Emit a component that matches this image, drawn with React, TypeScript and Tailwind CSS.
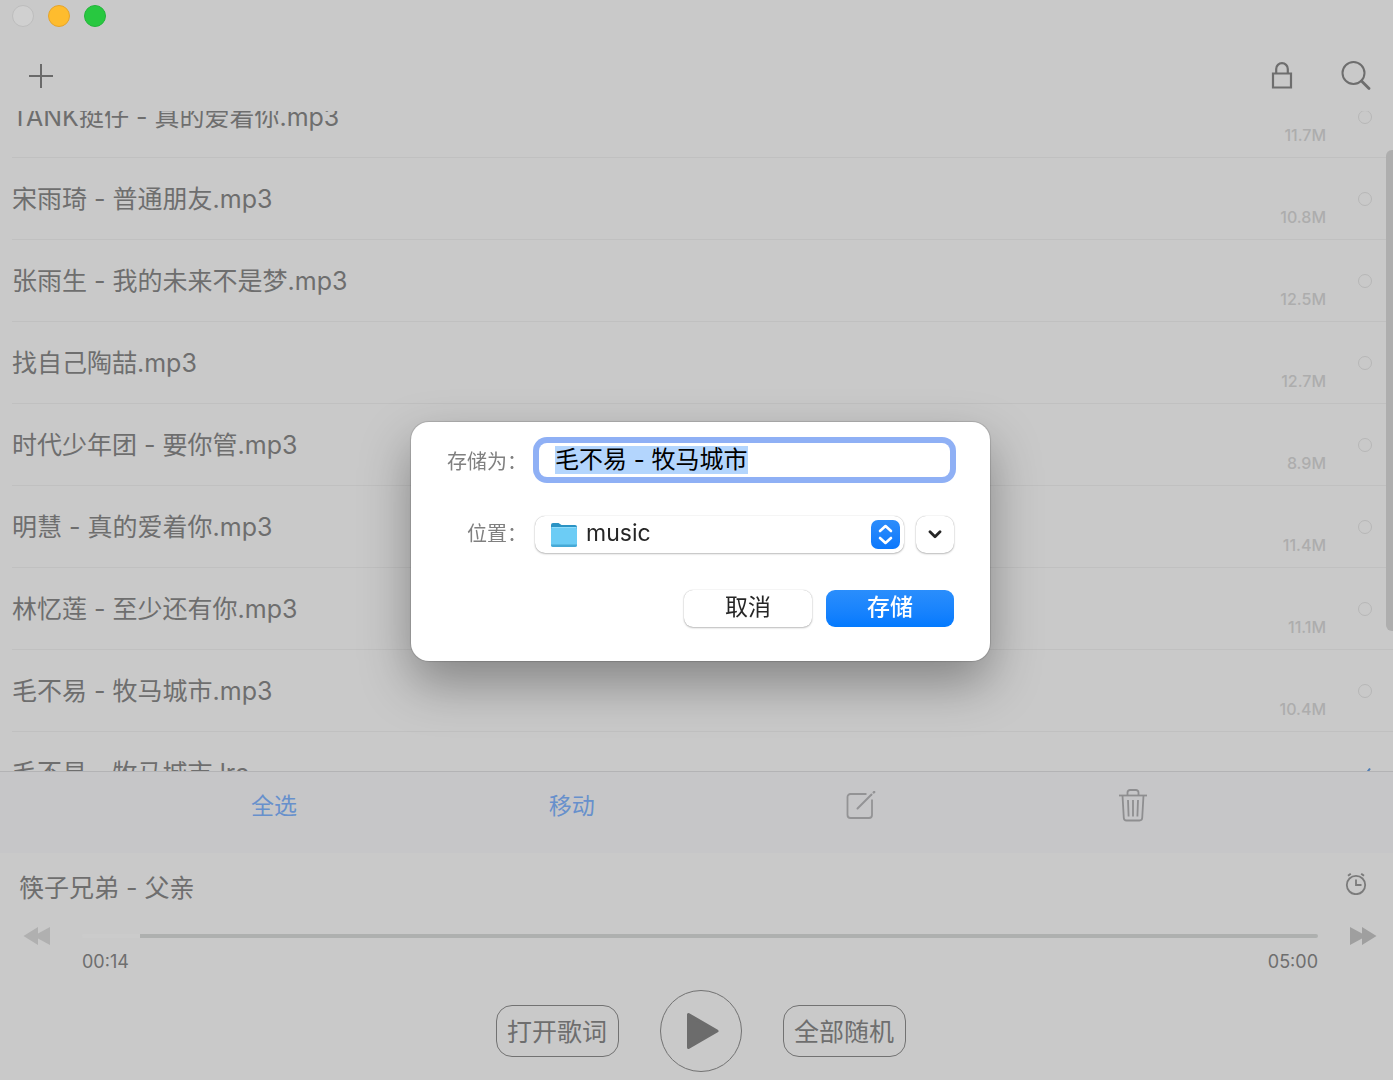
import { useEffect, useRef, useState } from "react";

type Track = { name: string; size?: string; done?: boolean };

const tracks: Track[] = [
  { name: "TANK挺仔 - 真的爱着你.mp3", size: "11.7M" },
  { name: "宋雨琦 - 普通朋友.mp3", size: "10.8M" },
  { name: "张雨生 - 我的未来不是梦.mp3", size: "12.5M" },
  { name: "找自己陶喆.mp3", size: "12.7M" },
  { name: "时代少年团 - 要你管.mp3", size: "8.9M" },
  { name: "明慧 - 真的爱着你.mp3", size: "11.4M" },
  { name: "林忆莲 - 至少还有你.mp3", size: "11.1M" },
  { name: "毛不易 - 牧马城市.mp3", size: "10.4M" },
  { name: "毛不易 - 牧马城市.lrc", done: true },
];

const DURATION = 300;

function PlusIcon() {
  return (
    <svg width="24" height="24" viewBox="0 0 24 24" fill="none" stroke="#6a6a6a" strokeWidth="2">
      <path d="M12 0v24M0 12h24" />
    </svg>
  );
}

function LockIcon() {
  return (
    <svg width="22" height="28" viewBox="0 0 22 28" fill="none" stroke="#6e6e6e" strokeWidth="2.200">
      <path d="M2 11.500h18v14H2z" />
      <path d="M5.200 11.500V7a5.800 5.800 0 0 1 11.600 0v4.500" />
    </svg>
  );
}

function SearchIcon() {
  return (
    <svg width="30" height="30" viewBox="0 0 30 30" fill="none" stroke="#6e6e6e">
      <circle cx="12.500" cy="12" r="11" strokeWidth="2" />
      <path d="M20.500 20l7.500 7.500" strokeWidth="2.800" strokeLinecap="round" />
    </svg>
  );
}

function EditIcon() {
  return (
    <svg width="30" height="30" viewBox="0 0 30 30" fill="none" stroke="#939395" strokeWidth="1.800">
      <path d="M20.500 3H4.500A3 3 0 0 0 1.500 6v18a3 3 0 0 0 3 3h18.500a3 3 0 0 0 3-3V8.500" />
      <path d="M11.500 17.500L25.500 3.500" strokeWidth="2" strokeLinecap="round" />
      <path d="M27.800 1.400l.4-.4" strokeWidth="2.400" strokeLinecap="round" />
    </svg>
  );
}

function TrashIcon() {
  return (
    <svg width="28" height="34" viewBox="0 0 28 34" fill="none" stroke="#8e8e90" strokeWidth="1.800">
      <path d="M0 6.500h28" />
      <path d="M8.500 6.500V3.500A2.500 2.500 0 0 1 11 1h6a2.500 2.500 0 0 1 2.500 2.500v3" />
      <path d="M3.500 6.500l1.300 22.500a2.700 2.700 0 0 0 2.700 2.500h13a2.700 2.700 0 0 0 2.700-2.500L24.500 6.500" />
      <path d="M9 11l.6 16.500M14 11v16.500M19 11l-.6 16.500" />
    </svg>
  );
}

function AlarmIcon() {
  return (
    <svg width="22" height="22" viewBox="0 0 22 22" fill="none" stroke="#7b7b7b" strokeWidth="1.800">
      <circle cx="11" cy="12" r="9.200" />
      <path d="M11 6.500V12h5.500" />
      <path d="M3 2.800L5.800.8M19 2.800L16.200.8" strokeWidth="2" />
    </svg>
  );
}

function SkipIcon({ back = false }: { back?: boolean }) {
  return (
    <svg width="28" height="18" viewBox="0 0 28 18" fill={back ? "#b0b0b0" : "#9f9f9f"} className={back ? "rotate-180" : ""}>
      <path d="M1 0L13 6.500V0L27.500 9 13 18v-6.500L1 18z" />
    </svg>
  );
}

function FolderIcon() {
  return (
    <svg width="28" height="26" viewBox="0 0 28 26">
      <path d="M1 3a2 2 0 0 1 2-2h5.500l3 2H25a2 2 0 0 1 2 2V12H1z" fill="#2a93c4" />
      <rect x="1" y="5" width="26" height="20" rx="2" fill="#6cccf5" />
      <path d="M1 22.500h26V23a2 2 0 0 1-2 2H3a2 2 0 0 1-2-2z" fill="#46a9d6" />
      <path d="M1.500 5.500h25" stroke="#8fdcfb" />
    </svg>
  );
}

function SaveDialog() {
  const [name, setName] = useState("毛不易 - 牧马城市");
  const inputRef = useRef<HTMLInputElement>(null);

  useEffect(() => {
    inputRef.current?.focus();
    inputRef.current?.select();
  }, []);

  return (
    <div className="fixed inset-0 flex items-center justify-center pl-2 pt-0.5">
      <form
        role="dialog"
        aria-label="存储"
        onSubmit={(e) => e.preventDefault()}
        className="w-[579px] rounded-[18px] bg-white pt-[21px] pr-9 pb-[34px] pl-9 shadow-[0_0_1px_1px_rgba(0,0,0,0.14),0_22px_50px_rgba(0,0,0,0.34)]"
      >
        <div className="flex items-center gap-3">
          <label htmlFor="filename" className="w-20 shrink-0 pt-1 text-right text-xl leading-7 text-[#808080]">存储为：</label>
          <div className="mr-1 flex h-[34px] min-w-0 flex-1 items-center rounded-lg bg-white pl-4 ring-6 ring-[#8fb0f5]">
            <input
              id="filename"
              ref={inputRef}
              value={name}
              onChange={(e) => setName(e.target.value)}
              className="h-7 w-full text-2xl leading-7 text-black outline-none selection:bg-[#b3d5fd] selection:text-black"
            />
          </div>
        </div>

        <div className="mt-[39px] flex items-center gap-2">
          <label htmlFor="location" className="w-20 shrink-0 text-right text-xl leading-7 text-[#808080]">位置：</label>
          <div className="relative flex-1">
            <select
              id="location"
              className="block h-[37px] w-full appearance-none rounded-[10px] bg-white pr-10 pb-0.5 pl-[51px] text-[23px] leading-8 text-[#262626] shadow-[0_0_1px_rgba(0,0,0,0.3),0_1px_2px_rgba(0,0,0,0.25)]"
            >
              <option>music</option>
            </select>
            <span className="pointer-events-none absolute top-1.5 left-[15px]"><FolderIcon /></span>
            <span className="pointer-events-none absolute top-1 right-1 flex size-[29px] items-center justify-center rounded-[7px] bg-linear-to-b from-[#2c8dfb] to-[#0a78fc]">
              <svg width="15" height="21" viewBox="0 0 15 21" fill="none" stroke="#fff" strokeWidth="2.600" strokeLinecap="round" strokeLinejoin="round">
                <path d="M2 7l5.500-5L13 7M2 14l5.500 5 5.500-5" />
              </svg>
            </span>
          </div>
          <button
            type="button"
            aria-label="展开"
            className="ml-1 flex h-[37px] w-[38px] items-center justify-center rounded-[10px] bg-white shadow-[0_0_1px_rgba(0,0,0,0.3),0_1px_2px_rgba(0,0,0,0.25)]"
          >
            <svg width="14" height="9" viewBox="0 0 14 9" fill="none" stroke="#262626" strokeWidth="2.800" strokeLinecap="round" strokeLinejoin="round">
              <path d="M2 1.800l5 5 5-5" />
            </svg>
          </button>
        </div>

        <div className="mt-[37px] flex justify-end gap-3.5">
          <button
            type="button"
            className="h-[37px] w-32 rounded-[9px] bg-white pb-0.5 text-[23px] leading-8 text-[#262626] shadow-[0_0_1px_rgba(0,0,0,0.3),0_1px_2px_rgba(0,0,0,0.25)]"
          >
            取消
          </button>
          <button
            type="submit"
            className="h-[37px] w-32 rounded-[9px] bg-linear-to-b from-[#2a8efc] to-[#037afe] pb-0.5 text-[23px] leading-8 font-medium text-white"
          >
            存储
          </button>
        </div>
      </form>
    </div>
  );
}

export default function App() {
  const [position, setPosition] = useState(14);
  const played = (position / DURATION) * 100;

  return (
    <main className="flex h-screen flex-col overflow-hidden bg-[#c9c9c9] font-['Inter','Noto_Sans_CJK_SC',sans-serif] text-[#6e6e6e]">
      <div className="flex h-8 shrink-0 items-center gap-3.5 pl-3">
        <button aria-label="关闭" className="size-[22px] rounded-full border border-[#bdbdbd] bg-[#d0d0d0]" />
        <button aria-label="最小化" className="size-[22px] rounded-full border border-[#e5a42c] bg-[#febc2e]" />
        <button aria-label="缩放" className="size-[22px] rounded-full border border-[#23b53a] bg-[#28c840]" />
      </div>

      <header className="flex h-[79px] shrink-0 items-center pt-2 pr-[22px] pl-[29px]">
        <button aria-label="添加"><PlusIcon /></button>
        <button aria-label="锁定" className="mr-12 ml-auto"><LockIcon /></button>
        <button aria-label="搜索"><SearchIcon /></button>
      </header>

      <div className="relative min-h-0 flex-1 overflow-hidden">
        {/* list is scrolled a little way down */}
        <ul className="-mt-[35px]">
          {tracks.map((t) => (
            <li key={t.name} className="ml-3 flex h-[82px] items-center border-b border-[#c0c0c0] pr-[21px]">
              <span className="flex-1 text-[25px] leading-9">{t.name}</span>
              <span className="mr-8 self-end pb-2.5 text-base leading-6 font-medium text-[#adadad]">{t.size}</span>
              {t.done ? (
                <svg width="14" height="14" viewBox="0 0 14 14" fill="none" stroke="#4f7db5" strokeWidth="2">
                  <path d="M1 8l4 4 7-9.500" />
                </svg>
              ) : (
                <input
                  type="checkbox"
                  aria-label={t.name}
                  className="size-3.5 appearance-none rounded-full border border-[#b7b7b7] checked:bg-[#6790cc]"
                />
              )}
            </li>
          ))}
        </ul>
        <div className="absolute top-[39px] right-0 h-[481px] w-[7px] rounded-l-md bg-[#aeaeae]" />
      </div>

      <nav className="flex h-[82px] shrink-0 items-start justify-between border-t border-[#b3b3b5] bg-[#c6c6c8] pt-4 pr-[246px] pl-[242px] text-[23px] text-[#6790cc]">
        <button className="h-9 w-16 leading-9">全选</button>
        <button className="h-9 w-16 leading-9">移动</button>
        <button aria-label="编辑" className="flex h-9 w-12 items-center justify-center"><EditIcon /></button>
        <button aria-label="删除" className="flex h-9 w-7 items-center justify-center"><TrashIcon /></button>
      </nav>

      <footer className="shrink-0 pt-[17px] pb-2">
        <div className="flex h-9 items-center justify-between pr-[26px] pl-[19px]">
          <h1 className="text-[25px] leading-9">筷子兄弟 - 父亲</h1>
          <button aria-label="定时" className="mb-2"><AlarmIcon /></button>
        </div>

        <div className="mt-4 flex h-7 items-center pr-4 pl-[23px]">
          <button aria-label="上一首"><SkipIcon back /></button>
          <input
            type="range"
            aria-label="播放进度"
            min={0}
            max={DURATION}
            value={position}
            onChange={(e) => setPosition(Number(e.target.value))}
            className="mx-[31px] h-1 min-w-0 flex-1 appearance-none rounded-full [&::-webkit-slider-thumb]:size-0 [&::-webkit-slider-thumb]:appearance-none"
            style={{ background: `linear-gradient(to right, #cbcbcb ${played}%, #aeb0af ${played}%)` }}
          />
          <button aria-label="下一首"><SkipIcon /></button>
        </div>

        <div className="flex h-6 items-center justify-between pr-[75px] pl-[82px] text-lg leading-6">
          <span>00:14</span>
          <span>05:00</span>
        </div>

        <div className="mt-4 flex items-center justify-center gap-[41px] pl-2">
          <button className="h-[52px] w-[123px] rounded-2xl border border-[#727272] pt-0.5 text-[25px] leading-9">打开歌词</button>
          <button aria-label="播放" className="flex size-[82px] items-center justify-center rounded-full border border-[#727272] pl-1">
            <svg width="34" height="38" viewBox="0 0 34 38" fill="#6c6c6c" stroke="#6c6c6c" strokeWidth="3" strokeLinejoin="round">
              <path d="M2.500 2.500v33L31 19z" />
            </svg>
          </button>
          <button className="h-[52px] w-[123px] rounded-2xl border border-[#727272] pt-0.5 text-[25px] leading-9">全部随机</button>
        </div>
      </footer>

      <SaveDialog />
    </main>
  );
}
